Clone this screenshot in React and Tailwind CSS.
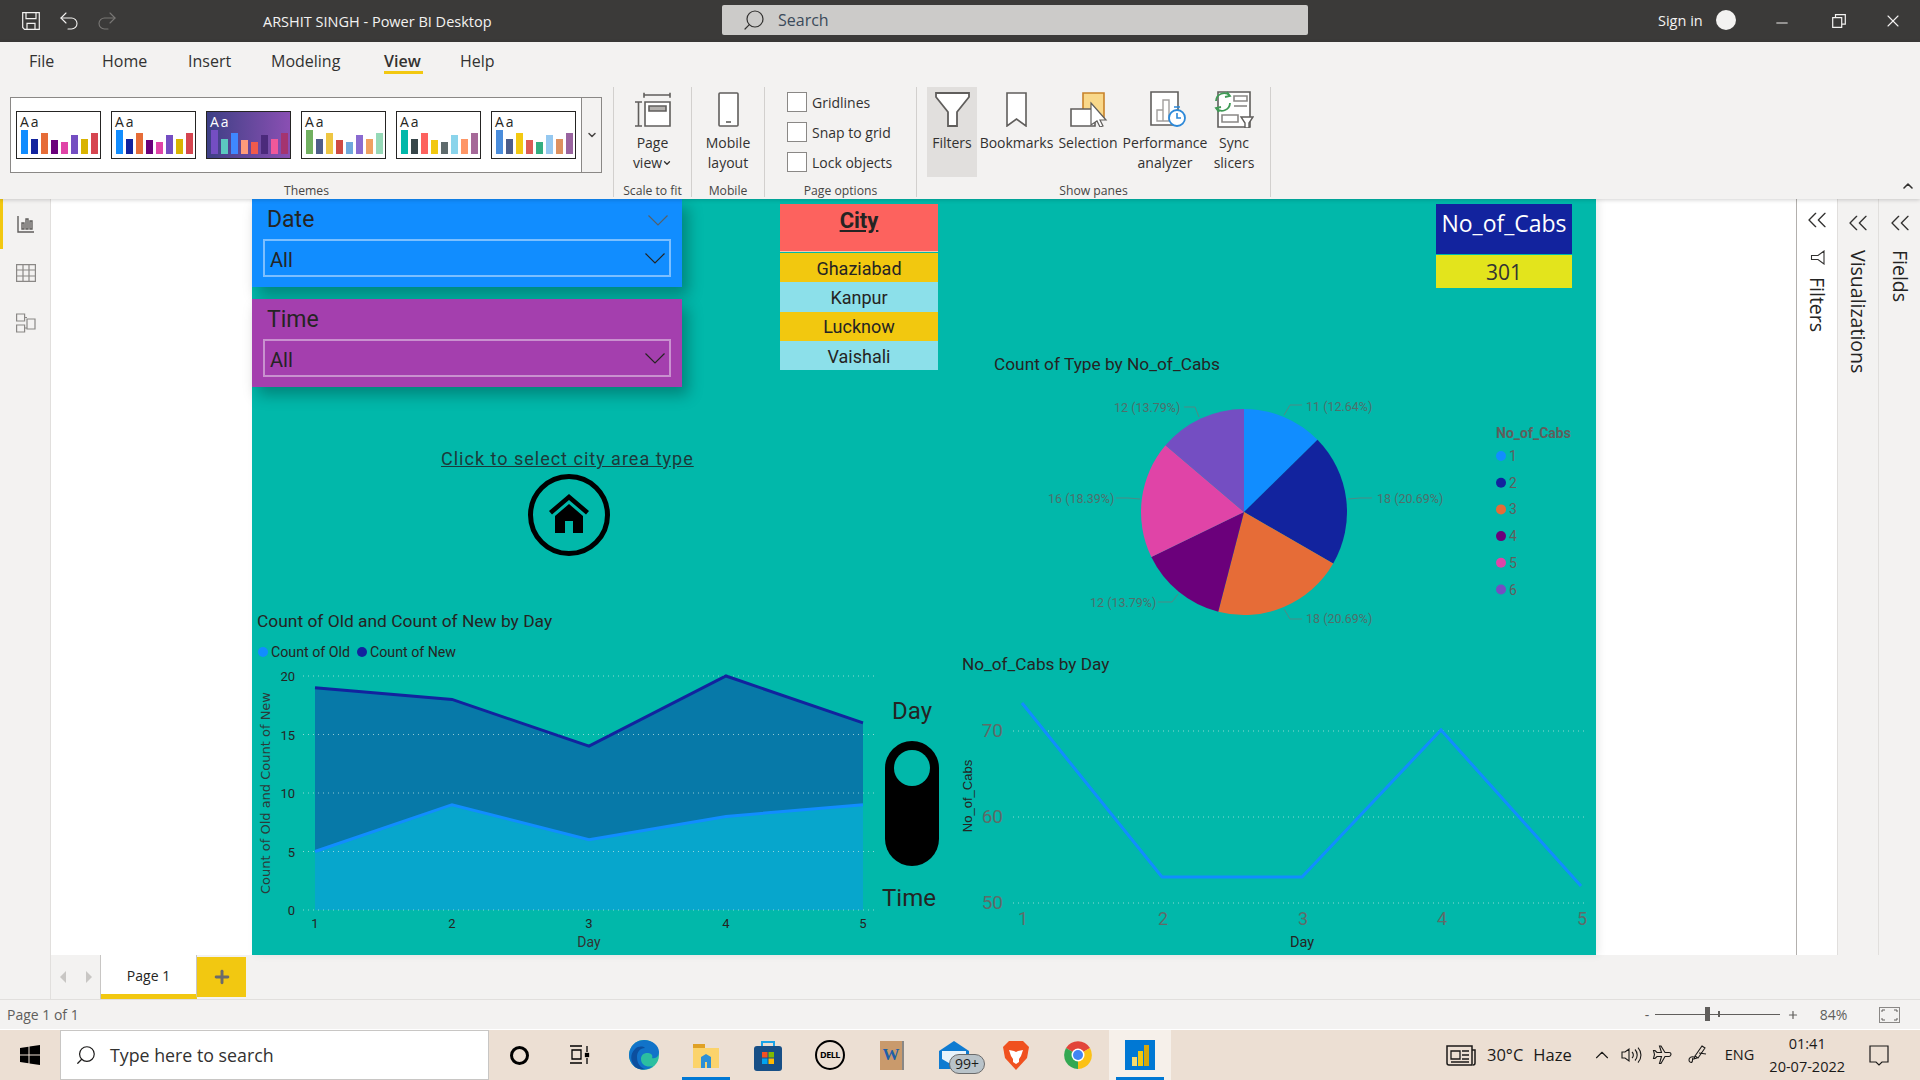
import React from 'react';
import { ChevronDown, ChevronUp, ChevronsLeft, Minus, Plus, Redo2, Search, Undo2, X } from 'lucide-react';

const din = "[font-family:Roboto,sans-serif]";

const themes = [
  { bg: 'bg-white', text: 'text-[#252423]', bars: ['#118dff', '#12239e', '#e66c37', '#6b007b', '#e044a7', '#744ec2', '#d9b300', '#d64550'] },
  { bg: 'bg-white', text: 'text-[#252423]', bars: ['#118dff', '#12239e', '#e66c37', '#6b007b', '#e044a7', '#744ec2', '#d9b300', '#d64550'] },
  { bg: 'bg-gradient-to-r from-[#3d3f85] to-[#8a4fb3]', text: 'text-white', bars: ['#744ec2', '#5bc8c0', '#3f88ff', '#ff9b7a', '#f05a4c', '#4b2a7b', '#f0589a', '#a43470'] },
  { bg: 'bg-white', text: 'text-[#252423]', bars: ['#71b060', '#4e5d8a', '#eec643', '#cf4b43', '#6fa8dc', '#8a6bd0', '#f0a060', '#96d9b7'] },
  { bg: 'bg-white', text: 'text-[#252423]', bars: ['#01b8aa', '#374649', '#fd625e', '#f2c80f', '#5f6b6d', '#8ad4eb', '#fe9666', '#a66999'] },
  { bg: 'bg-white', text: 'text-[#252423]', bars: ['#4a8ddc', '#4c5d8a', '#f3c911', '#dc5b57', '#33ae81', '#95c8f0', '#dd915f', '#9a64a0'] },
];
const barHeights = [24, 15, 21, 14, 12, 19, 15, 21];

const ThemeThumb = ({ theme }) => (
  <div className={`w-[85px] h-[48px] border border-[#252423] px-[3px] relative ${theme.bg}`}>
    <div className={`absolute left-[3px] top-[2px] text-[14px] leading-[16px] tracking-[2px] ${theme.text}`}>Aa</div>
    <div className="absolute left-[4px] bottom-[4px] flex items-end gap-[3px]">
      {theme.bars.map((c, i) => (
        <div key={i} className="w-[7px]" style={{ height: barHeights[i], background: c }} />
      ))}
    </div>
  </div>
);

const Group = ({ width, label, children, labelClass = '' }) => (
  <div className={`${width} h-[110px] shrink-0 flex flex-col border-r border-[#d2d0ce]`}>
    <div className="h-[94px] flex">{children}</div>
    <div className={`h-[16px] leading-[20px] text-[12.2px] text-center text-[#484644] whitespace-nowrap ${labelClass}`}>{label}</div>
  </div>
);

const RibbonButton = ({ icon, lines, width, active, iconClass = '' }) => (
  <div className={`${width} h-[90px] shrink-0 flex flex-col items-center pt-[5px] ${active ? 'bg-[#e1dfdd]' : ''}`}>
    <div className={`h-[35px] flex items-center justify-center ${iconClass}`}>{icon}</div>
    <div className="mt-[6px] text-[14px] leading-[20px] text-center text-[#323130] whitespace-nowrap">
      {lines.map((l, i) => <div key={i} className="flex items-center justify-center">{l}</div>)}
    </div>
  </div>
);

const CheckRow = ({ label }) => (
  <div className="flex items-center gap-[5px] h-[20px]">
    <div className="w-[20px] h-[20px] bg-white border border-[#8a8886]" />
    <span className="text-[14px] text-[#323130] whitespace-nowrap">{label}</span>
  </div>
);

const TitleBar = () => (
  <div className="h-[42px] shrink-0 bg-[#3b3a39] flex items-center text-white">
    <svg className="ml-[22px]" width="18" height="18" viewBox="0 0 18 18" fill="none" stroke="#f3f2f1" strokeWidth="1.2">
      <path d="M.7.7h16.6v16.6H2.5L.7 15.5z" />
      <path d="M4 .7v6h10v-6M5 17.3v-6h8v6" />
    </svg>
    <Undo2 className="ml-[17px]" size={24} strokeWidth={1.1} color="#f3f2f1" />
    <Redo2 className="ml-[14px]" size={24} strokeWidth={1.1} color="#797775" />
    <div className="ml-[144px] w-[228px] text-[14.5px] whitespace-nowrap text-[#f3f2f1] mt-[2px]">ARSHIT SINGH - Power BI Desktop</div>
    <div className="ml-[231px] w-[586px] h-[30px] mb-[2px] rounded-[2px] bg-[#cccbc9] flex items-center pl-[20px] text-[#3b4a5a]">
      <Search size={24} strokeWidth={1.2} color="#323130" className="-scale-x-100" />
      <span className="ml-[12px] text-[16px]">Search</span>
    </div>
    <div className="ml-[350px] text-[14.5px] text-[#f3f2f1] mb-[1px]">Sign in</div>
    <div className="ml-[13px] w-[20px] h-[20px] rounded-full bg-[#f3f2f1] mb-[3px]" />
    <Minus className="ml-[37px] mt-[3px]" size={18} strokeWidth={1.3} color="#f3f2f1" />
    <svg className="ml-[41px]" width="14" height="14" viewBox="0 0 14 14" fill="none" stroke="#f3f2f1" strokeWidth="1.2">
      <path d="M.7 3.7h9v9.6h-9zM3.5 3.5V.7h9.8v9.5h-3.5" />
    </svg>
    <X className="ml-[37px]" size={20} strokeWidth={1.3} color="#f3f2f1" />
  </div>
);

const Ribbon = () => (
  <div className="h-[157px] shrink-0 bg-[#f3f2f1] relative z-10 shadow-[0_1px_4px_rgba(0,0,0,0.18)]">
    <div className="h-[36px] pt-[2px] flex items-center text-[16px] text-[#323130] relative">
      <span className="ml-[29px] w-[73px]">File</span>
      <span className="w-[86px]">Home</span>
      <span className="w-[83px]">Insert</span>
      <span className="w-[113px]">Modeling</span>
      <span className="w-[76px] font-semibold relative">
        View
        <span className="absolute left-0 top-[22px] w-[39px] h-[3px] bg-[#f2c811]" />
      </span>
      <span>Help</span>
    </div>
    <div className="pt-[9px] pl-[10px] flex">
      <Group width="w-[604px]" label="Themes" labelClass="pr-[10px]">
        <div className="mt-[10px] w-[592px] h-[76px] bg-white border border-[#8a8886] flex">
          <div className="w-[570px] flex items-center gap-[10px] pl-[5px]">
            {themes.map((t, i) => <ThemeThumb key={i} theme={t} />)}
          </div>
          <div className="flex-1 bg-[#f3f2f1] border-l border-[#8a8886] flex items-center justify-center">
            <ChevronDown size={12} strokeWidth={3} color="#484644" />
          </div>
        </div>
      </Group>
      <Group width="w-[78px]" label="Scale to fit">
        <RibbonButton width="w-full" lines={['Page', <>view<ChevronDown size={10} strokeWidth={3} color="#323130" /></>]} icon={
          <svg width="36" height="35" viewBox="0 0 36 35" fill="none" stroke="#605e5c" strokeWidth="1.6">
            <path d="M9 .8v5M9 3h26M35 .8v5M0 10h7M3.5 10v24M0 34h7" />
            <path d="M10 10h25v24H10z" fill="#fff" />
            <path d="M14 14h17v5H14z" fill="#b3b0ad" />
          </svg>
        } />
      </Group>
      <Group width="w-[73px]" label="Mobile">
        <RibbonButton width="w-full" lines={['Mobile', 'layout']} icon={
          <svg width="21" height="35" viewBox="0 0 21 35" fill="#fff" stroke="#605e5c" strokeWidth="1.6">
            <rect x="1" y="1" width="19" height="33" rx="1" />
            <path d="M8 30h5" />
          </svg>
        } />
      </Group>
      <Group width="w-[152px]" label="Page options">
        <div className="pl-[22px] pt-[5px] flex flex-col gap-[10px]">
          <CheckRow label="Gridlines" />
          <CheckRow label="Snap to grid" />
          <CheckRow label="Lock objects" />
        </div>
      </Group>
      <Group width="w-[354px]" label="Show panes">
        <div className="pl-[10px] flex">
          <RibbonButton active width="w-[50px]" lines={['Filters']} icon={
            <svg width="35" height="35" viewBox="0 0 35 35" fill="#fff" stroke="#605e5c" strokeWidth="1.8">
              <path d="M1 1h33v4L22 20v14h-9V20L1 5z" />
            </svg>
          } />
          <RibbonButton width="w-[79px]" lines={['Bookmarks']} icon={
            <svg width="21" height="35" viewBox="0 0 21 35" fill="#fff" stroke="#605e5c" strokeWidth="1.6">
              <path d="M1 1h19v33l-9.500-7L1 34z" />
            </svg>
          } />
          <RibbonButton width="w-[64px]" iconClass="translate-x-[1px]" lines={['Selection']} icon={
            <svg width="38" height="35" viewBox="0 0 38 35">
              <path d="M13 1h21v26H13z" fill="#f9d88a" stroke="#c8822a" strokeWidth="1.6" />
              <path d="M1 17h24v17H1z" fill="#fff" stroke="#605e5c" strokeWidth="1.6" />
              <path d="M21 11l15 17-6 0 3 6-3 1-3-6-6 4z" fill="#fff" stroke="#605e5c" strokeWidth="1.2" />
            </svg>
          } />
          <RibbonButton width="w-[90px]" iconClass="translate-x-[3px]" lines={['Performance', 'analyzer']} icon={
            <svg width="36" height="37" viewBox="0 0 36 37" fill="none">
              <path d="M1 1h27v33H1z" fill="#fff" stroke="#605e5c" strokeWidth="1.6" />
              <path d="M7 19h6v11H7zM13 9h6v21h-6z" stroke="#a19f9d" strokeWidth="1.4" />
              <circle cx="27" cy="27" r="8" fill="#fff" stroke="#2b88d8" strokeWidth="1.8" />
              <path d="M27 22v5h4M24 16h6" stroke="#2b88d8" strokeWidth="1.6" />
            </svg>
          } />
          <RibbonButton width="w-[48px]" lines={['Sync', 'slicers']} icon={
            <svg width="40" height="37" viewBox="0 0 40 37" fill="none">
              <path d="M4 1h32v35H4z" fill="#fff" stroke="#605e5c" strokeWidth="1.6" />
              <path d="M20 5h13v5H20zM8 24h16v7H8z" stroke="#8a8886" strokeWidth="1.6" />
              <path d="M20 15h13" stroke="#8a8886" strokeWidth="1.6" />
              <path d="M27 26h12l-4 6v5h-4v-5z" fill="#fff" stroke="#605e5c" strokeWidth="1.4" />
              <path d="M2 10a8 8 0 0 1 14-5M16 12a8 8 0 0 1-14 5M13 1l3 4-5 1M5 21l-3-4 5-1" stroke="#3f9a55" strokeWidth="1.8" fill="none" />
            </svg>
          } />
        </div>
      </Group>
      <div className="flex-1 flex justify-end items-end pr-[4px] pb-[3px]">
        <ChevronUp size={16} strokeWidth={2.4} color="#323130" />
      </div>
    </div>
  </div>
);

const Rail = () => (
  <div className="w-[51px] shrink-0 bg-[#f3f2f1] border-r border-[#e1dfdd] pl-[2px] flex flex-col items-center relative">
    <div className="absolute left-0 top-0 w-[3px] h-[50px] bg-[#f2c811]" />
    <svg className="mt-[16px]" width="18" height="18" viewBox="0 0 18 18" fill="none" stroke="#605e5c" strokeWidth="1.4">
      <path d="M1 1v16h16M5 14V8h2v6zM9 14V4h2v10zM13 14V6h2v8z" />
    </svg>
    <svg className="mt-[31px]" width="20" height="18" viewBox="0 0 20 18" fill="none" stroke="#8a8886" strokeWidth="1.2">
      <path d="M.6.6h18.800v16.800H.6zM.6 6h18.800M.6 12h18.800M7 .6v16.800M13 .6v16.800" />
    </svg>
    <svg className="mt-[31px]" width="20" height="20" viewBox="0 0 20 20" fill="none" stroke="#8a8886" strokeWidth="1.2">
      <path d="M.6 1h8v7h-8zM.6 12h8v7h-8zM11 6h8v10h-8zM8.600 4.500H11M8.600 15H11" />
    </svg>
  </div>
);

const Vee = ({ color }) => (
  <svg width="20" height="11" viewBox="0 0 20 11" fill="none" stroke={color} strokeWidth="1.2">
    <path d="M.5.5L10 10 19.500.5" />
  </svg>
);

const Slicer = ({ bg, border, label, top, chevron }) => (
  <div className={`absolute left-0 ${top} w-[430px] h-[88px] ${bg} shadow-[6px_8px_14px_rgba(0,0,0,0.28)] ${din} flex flex-col`}>
    <div className="h-[40px] pt-[2px] flex items-center justify-between pl-[15px] pr-[14px] text-[23px] text-[#252423]">
      <span>{label}</span>
      {chevron && <Vee color="#55606a" />}
    </div>
    <div className={`mx-[11px] h-[38px] border-2 ${border} flex items-center justify-between pl-[5px] pr-[4px] text-[#252423] text-[20px]`}>
      <span className="mt-[4px]">All</span>
      <Vee color="#252423" />
    </div>
  </div>
);

const CityList = () => (
  <div className={`absolute left-[528px] top-[5px] w-[158px] ${din} text-[18px] text-[#252423] text-center`}>
    <div className="h-[48px] bg-[#fd625e] border-b border-[#f6c9b0] pt-[2px] text-[22px] font-bold underline leading-[30px]">City</div>
    <div className="h-[29px] mt-[1px] bg-[#f2c80f] leading-[31px]">Ghaziabad</div>
    <div className="h-[30px] bg-[#8ce0ea] leading-[31px]">Kanpur</div>
    <div className="h-[29px] bg-[#f2c80f] leading-[29px]">Lucknow</div>
    <div className="h-[29px] bg-[#8ce0ea] leading-[31px]">Vaishali</div>
  </div>
);

const CabsCard = () => (
  <div className="absolute left-[1184px] top-[5px] w-[136px] text-center">
    <div className="h-[50px] bg-[#12239e] text-white text-[23px] leading-[38px]">No_of_Cabs</div>
    <div className="h-[33px] mt-[1px] bg-[#e3e41c] text-[#333] text-[21px] leading-[34px]">301</div>
  </div>
);

const polar = (cx, cy, r, a) => [cx + r * Math.sin(a), cy - r * Math.cos(a)];

const pieData = [
  { v: 11, c: '#118dff' },
  { v: 18, c: '#12239e' },
  { v: 18, c: '#e66c37' },
  { v: 12, c: '#6b007b' },
  { v: 16, c: '#e044a7' },
  { v: 12, c: '#744ec2' },
];

const pieLabels = [
  { t: '11 (12.64%)', x: 1306, y: 407, line: '1284,415 1290,405 1302,405' },
  { t: '18 (20.69%)', x: 1377, y: 499, line: '1348,499 1360,498 1372,498' },
  { t: '18 (20.69%)', x: 1306, y: 619, line: '1284,609 1290,619 1302,619' },
  { t: '12 (13.79%)', x: 1090, y: 603, line: '1178,594 1172,602 1158,602' },
  { t: '16 (18.39%)', x: 1048, y: 499, line: '1140,499 1128,498 1116,498' },
  { t: '12 (13.79%)', x: 1114, y: 408, line: '1199,417 1195,407 1184,407' },
];

const PieChart = () => {
  let angle = 0;
  const slices = pieData.map((d) => {
    const start = angle;
    angle += (d.v / 87) * Math.PI * 2;
    const [x1, y1] = polar(1244, 512, 103, start);
    const [x2, y2] = polar(1244, 512, 103, angle);
    return <path key={d.c} d={`M1244 512L${x1} ${y1}A103 103 0 0 1 ${x2} ${y2}Z`} fill={d.c} />;
  });
  return (
    <svg className="absolute left-[730px] top-[150px]" width="600" height="290" viewBox="982 349 600 290" fontFamily="Roboto, sans-serif">
      <text x="994" y="370" fontSize="17.300" fill="#252423">Count of Type by No_of_Cabs</text>
      {slices}
      {pieLabels.map((l, i) => (
        <g key={i}>
          <polyline points={l.line} fill="none" stroke="#4f8a85" strokeWidth="1" />
          <text x={l.x} y={l.y + 4} fontSize="12.500" fill="#4f6f6b">{l.t}</text>
        </g>
      ))}
      <text x="1496" y="438" fontSize="14" fontWeight="700" fill="#605e5c">No_of_Cabs</text>
      {pieData.map((d, i) => (
        <g key={d.c}>
          <circle cx="1501" cy={456 + i * 26.7} r="5" fill={d.c} />
          <text x="1509" y={461 + i * 26.7} fontSize="14" fill="#605e5c">{i + 1}</text>
        </g>
      ))}
    </svg>
  );
};

const areaX = [315, 452, 589, 726, 863];
const areaY = (v) => 910 - v * 11.7;
const toPoints = (vals) => vals.map((v, i) => `${areaX[i]},${areaY(v)}`).join(' ');
const newVals = [19, 18, 14, 20, 16];
const oldVals = [5, 9, 6, 8, 9];

const AreaChart = () => (
  <svg className="absolute left-0 top-[406px]" width="628" height="350" viewBox="252 605 628 350" fontFamily="Roboto, sans-serif">
    <text x="257" y="627" fontSize="17.400" fill="#252423">Count of Old and Count of New by Day</text>
    <circle cx="263" cy="652" r="5" fill="#118dff" />
    <text x="271" y="657" fontSize="14.200" fill="#252423">Count of Old</text>
    <circle cx="362" cy="652" r="5" fill="#12239e" />
    <text x="370" y="657" fontSize="14.200" fill="#252423">Count of New</text>
    <polygon points={`${toPoints(newVals)} 863,910 315,910`} fill="#0779a8" />
    <polygon points={`${toPoints(oldVals)} 863,910 315,910`} fill="#07a6cc" />
    {[0, 5, 10, 15, 20].map((v) => (
      <g key={v}>
        <line x1="303" x2="874" y1={areaY(v)} y2={areaY(v)} stroke="#c8e8e4" strokeOpacity="0.7" strokeDasharray="1 4" />
        <text x="295" y={areaY(v) + 5} fontSize="13" textAnchor="end" fill="#252423">{v}</text>
      </g>
    ))}
    <polyline points={toPoints(newVals)} fill="none" stroke="#12239e" strokeWidth="3" />
    <polyline points={toPoints(oldVals)} fill="none" stroke="#118dff" strokeWidth="3" />
    {areaX.map((x, i) => (
      <text key={x} x={x} y="928" fontSize="13" textAnchor="middle" fill="#252423">{i + 1}</text>
    ))}
    <text x="589" y="947" fontSize="14" textAnchor="middle" fill="#333">Day</text>
    <text transform="translate(270 793) rotate(-90)" fontSize="13" textAnchor="middle" fill="#2b3b3a" fontFamily="DejaVu Sans, sans-serif">Count of Old and Count of New</text>
  </svg>
);

const lineX = [1022, 1162, 1302, 1441, 1581];
const lineY = [703, 877, 877, 730, 886];

const LineChart = () => (
  <svg className="absolute left-[698px] top-[441px]" width="646" height="315" viewBox="950 640 646 315" fontFamily="Roboto, sans-serif">
    <text x="962" y="670" fontSize="17.200" fill="#252423">No_of_Cabs by Day</text>
    {[[70, 731], [60, 817], [50, 903]].map(([v, y]) => (
      <g key={v}>
        <line x1="1013" x2="1588" y1={y} y2={y} stroke="#c8e8e4" strokeOpacity="0.7" strokeDasharray="1 4" />
        <text x="1003" y={y + 6} fontSize="19" textAnchor="end" fill="#5f6b68">{v}</text>
      </g>
    ))}
    <polyline points={lineX.map((x, i) => `${x},${lineY[i]}`).join(' ')} fill="none" stroke="#118dff" strokeWidth="3" />
    {lineX.map((x, i) => (
      <text key={x} x={x + 1} y="925" fontSize="18" textAnchor="middle" fill="#5f6b68">{i + 1}</text>
    ))}
    <text x="1302" y="947" fontSize="14.500" textAnchor="middle" fill="#252423">Day</text>
    <text transform="translate(972 796) rotate(-90)" fontSize="13" textAnchor="middle" fill="#252423" fontFamily="Liberation Sans, sans-serif">No_of_Cabs</text>
  </svg>
);

const Toggle = () => (
  <div className={`absolute left-[628px] top-[495px] w-[64px] flex flex-col items-center text-[24px] text-[#252423] ${din}`}>
    <div className="h-[34px] leading-[34px]">Day</div>
    <div className="mt-[13px] w-[54px] h-[125px] rounded-[27px] bg-black pt-[9px] flex justify-center">
      <div className="w-[36px] h-[36px] rounded-full bg-[#01b8aa]" />
    </div>
    <div className="mt-[15px] h-[34px] leading-[34px] -ml-[6px]">Time</div>
  </div>
);

const Canvas = () => (
  <div className="w-[1344px] h-[756px] shrink-0 bg-[#01b8aa] relative shadow-[3px_0_8px_rgba(0,0,0,0.08)]">
    <Slicer top="top-0" bg="bg-[#118dff]" border="border-[#7cbfff]" label="Date" chevron />
    <Slicer top="top-[100px]" bg="bg-[#a43fae]" border="border-[#c991cf]" label="Time" />
    <CityList />
    <CabsCard />
    <div className={`absolute left-[189px] top-[247px] h-[26px] leading-[26px] text-[18px] tracking-[1px] underline text-[#1c3a3a] whitespace-nowrap ${din}`}>
      Click to select city area type
    </div>
    <svg className="absolute left-[276px] top-[275px]" width="82" height="82" viewBox="0 0 82 82">
      <circle cx="41" cy="41" r="38.500" fill="none" stroke="#000" strokeWidth="5" />
      <path d="M21 37L41 20l20 17-3 3.500L41 26 24 40.500z" fill="#000" />
      <path d="M27 42l14-12 14 12v17H45V47h-8v12H27z" fill="#000" />
    </svg>
    <PieChart />
    <AreaChart />
    <Toggle />
    <LineChart />
  </div>
);

const SidePane = ({ bg, icon, label, border, top, textTop }) => (
  <div className={`w-[41px] shrink-0 ${bg} ${border} ${top} flex flex-col items-center`}>
    <ChevronsLeft size={32} strokeWidth={1} color="#323130" />
    {icon}
    <div className={`${textTop} [writing-mode:vertical-rl] text-[19.500px] leading-[24px] text-[#252423] whitespace-nowrap`}>{label}</div>
  </div>
);

const TabBar = () => (
  <div className="h-[44px] shrink-0 bg-[#f3f2f1] flex">
    <div className="w-[51px] border-r border-[#e1dfdd]" />
    <div className="w-[50px] flex items-center justify-center gap-[20px] border-r border-[#c8c6c4]">
      <svg width="6" height="12" viewBox="0 0 6 12" fill="#c8c6c4"><path d="M6 0v12L0 6z" /></svg>
      <svg width="6" height="12" viewBox="0 0 6 12" fill="#c8c6c4"><path d="M0 0v12l6-6z" /></svg>
    </div>
    <div className="w-[96px] bg-white border-b-[5px] border-[#f2c811] border-r border-r-[#c8c6c4] text-center text-[14px] leading-[42px] text-[#252423] font-medium">Page 1</div>
    <div className="mt-[2px] w-[49px] h-[40px] bg-[#f2c811] flex items-center justify-center">
      <Plus size={20} strokeWidth={3.500} color="#6b6b6b" />
    </div>
  </div>
);

const StatusBar = () => (
  <div className="h-[30px] shrink-0 bg-[#f3f2f1] border-t border-[#e1dfdd] flex items-center text-[#605e5c] text-[14px]">
    <span className="ml-[7px]">Page 1 of 1</span>
    <span className="ml-[1566px] w-[10px]">-</span>
    <div className="relative w-[125px] h-[1px] bg-[#605e5c]">
      <div className="absolute left-[50px] -top-[7px] w-[5px] h-[14px] bg-[#605e5c]" />
      <div className="absolute left-[63px] -top-[3px] w-[2px] h-[6px] bg-[#605e5c]" />
    </div>
    <Plus className="ml-[7px]" size={12} strokeWidth={2.4} color="#605e5c" />
    <span className="ml-[21px] text-[14px]">84%</span>
    <svg className="ml-[32px]" width="21" height="16" viewBox="0 0 21 16" fill="none">
      <rect x="0.500" y="0.500" width="20" height="15" stroke="#8a8886" />
      <path d="M3 5V3h3M15 3h3v2M3 11v2h3M18 11v2h-3" stroke="#605e5c" />
    </svg>
  </div>
);

const Slot = ({ children, active, underline }) => (
  <div className={`w-[62px] h-full shrink-0 flex items-center justify-center relative ${active ? 'bg-[#f6f0ea]' : ''}`}>
    {children}
    {underline && <div className="absolute bottom-0 left-[7px] right-[7px] h-[3px] bg-[#0078d4]" />}
  </div>
);

const Taskbar = () => (
  <div className="h-[51px] shrink-0 bg-[#ecdfd3] border-t border-white flex items-center text-[#1b1a19]">
    <div className="w-[60px] h-full flex items-center justify-center">
      <svg width="20" height="20" viewBox="0 0 20 20" fill="#000">
        <path d="M0 3l8.500-1.200v7.700H0zM9.500 1.600L20 0v9.500H9.500zM0 10.500h8.500v7.700L0 17zM9.500 10.500H20V20L9.500 18.400z" />
      </svg>
    </div>
    <div className="w-[429px] h-full bg-white border border-[#c8c6c4] flex items-center pl-[14px]">
      <Search size={22} strokeWidth={1.3} color="#1b1a19" className="-scale-x-100" />
      <span className="ml-[13px] text-[17.800px] text-[#323130]">Type here to search</span>
    </div>
    <div className="w-[61px] h-full flex items-center justify-center">
      <div className="w-[19px] h-[19px] rounded-full border-[3px] border-black" />
    </div>
    <div className="w-[61px] pr-[2px] h-full flex items-center justify-center">
      <svg width="21" height="20" viewBox="0 0 21 20" fill="none" stroke="#000" strokeWidth="1.300">
        <path d="M1 1h12M3 5h9v9H3zM1 18h12M18 1v6M18 13v6" />
        <rect x="16.500" y="8.500" width="3" height="3" fill="#000" />
      </svg>
    </div>
    <div className="w-[2px]" />
    <Slot>
      <svg width="30" height="30" viewBox="0 0 30 30">
        <circle cx="15" cy="15" r="15" fill="#2bbfa0" />
        <path d="M15 0a15 15 0 0 0-9 27c5 3 13 4 18-1-6 2-12-1-12-7 0-4 3-6 6-6 5 0 6 3 5 5 4 1 7-2 7-6C30 5 23 0 15 0z" fill="#1173c9" />
        <path d="M6 27c-5-6-5-13 0-18 3-3 8-3 10-1-5 0-8 4-8 9 0 4 1 7 4 10 2 1 3 2 4 2-4 1-7 0-10-2z" fill="#0c4f9e" />
      </svg>
    </Slot>
    <Slot underline>
      <svg width="28" height="28" viewBox="0 0 28 28">
        <path d="M1 3h12v5H1z" fill="#e0a125" />
        <path d="M1 7h26v20H1z" fill="#fbd36b" />
        <path d="M9 27V16l5-3 5 3v11h-4v-6h-2v6z" fill="#2c8fd6" />
      </svg>
    </Slot>
    <Slot>
      <svg width="28" height="31" viewBox="0 0 28 31">
        <path d="M8 7V2h12v5" fill="none" stroke="#1aa3e8" strokeWidth="2" />
        <rect y="6" width="28" height="25" rx="3" fill="#174f86" />
        <rect x="8" y="12" width="5.500" height="5.500" fill="#f25022" />
        <rect x="14.500" y="12" width="5.500" height="5.500" fill="#7fba00" />
        <rect x="8" y="18.500" width="5.500" height="5.500" fill="#00a4ef" />
        <rect x="14.500" y="18.500" width="5.500" height="5.500" fill="#ffb900" />
      </svg>
    </Slot>
    <Slot>
      <div className="w-[30px] h-[30px] rounded-full border-2 border-black flex items-center justify-center text-[9px] font-bold tracking-[-0.5px] text-black">DELL</div>
    </Slot>
    <Slot>
      <div className="w-[24px] h-[29px] bg-[#c99a6c] border-r-2 border-[#8a8886] flex items-center justify-center text-[#1f5fa8] font-bold text-[17px] [font-family:'Liberation_Serif',serif]">W</div>
    </Slot>
    <Slot>
      <div className="relative w-[30px] h-[28px]">
        <svg className="absolute left-0 top-0" width="30" height="28" viewBox="0 0 30 28">
          <path d="M0 10L15 0l15 10v18H0z" fill="#0f7bd1" />
          <path d="M3 10h24v8l-12 7-12-7z" fill="#e8f3fb" />
        </svg>
        <div className="absolute left-[10px] top-[13px] w-[36px] h-[20px] rounded-full bg-[#b9c3c9] border border-[#6b6b6b] text-[14px] leading-[18px] text-center">99+</div>
      </div>
    </Slot>
    <Slot>
      <svg width="26" height="30" viewBox="0 0 26 30">
        <path d="M6 1h14l3 3 3 3-2 11-11 12L2 18 0 7l3-3z" fill="#f0511f" />
        <path d="M6 10l5 1 2 1 2-1 5-1-2 6-2 3v3l-3 2-3-2v-3l-2-3z" fill="#fff" />
      </svg>
    </Slot>
    <Slot>
      <svg width="28" height="28" viewBox="0 0 28 28">
        <path d="M14 14L2 7a14 14 0 0 1 24 0z" fill="#e2453a" />
        <path d="M14 14L26 7a14 14 0 0 1-12 21z" fill="#fbc116" />
        <path d="M14 14v14A14 14 0 0 1 2 7z" fill="#33a852" />
        <circle cx="14" cy="14" r="6.500" fill="#fff" />
        <circle cx="14" cy="14" r="5" fill="#4285f4" />
      </svg>
    </Slot>
    <Slot active underline>
      <div className="w-[30px] h-[30px] bg-[#0078d4] flex items-end justify-center gap-[1px] pb-[4px]">
        <div className="w-[5px] h-[9px] bg-[#f7dc6f]" />
        <div className="w-[5px] h-[15px] bg-[#f2c811]" />
        <div className="w-[5px] h-[21px] bg-[#d6a80c]" />
      </div>
    </Slot>
    <div className="ml-[275px] flex items-center">
      <svg width="30" height="21" viewBox="0 0 30 21" fill="none" stroke="#1b1a19" strokeWidth="1.500">
        <path d="M1 1h25v19H3a2 2 0 0 1-2-2zM26 5h3v13a2 2 0 0 1-2 2" />
        <path d="M5 6h9v8H5zM16 6h7M16 10h7M16 14h7M5 17h18" strokeWidth="1.300" />
      </svg>
      <span className="ml-[11px] text-[16.500px]">30°C</span>
      <span className="ml-[10px] text-[16.500px]">Haze</span>
      <ChevronUp className="ml-[19px]" size={22} strokeWidth={1.2} color="#1b1a19" />
      <svg className="ml-[8px]" width="21" height="18" viewBox="0 0 21 18" fill="none" stroke="#1b1a19" strokeWidth="1.100">
        <path d="M1 6h3l4-3v12l-4-3H1zM11 6a4 4 0 0 1 0 6M14 3.500a8 8 0 0 1 0 11M17 1.500a11 11 0 0 1 0 15" />
      </svg>
      <svg className="ml-[10px]" width="20" height="20" viewBox="0 0 20 20" fill="none" stroke="#1b1a19" strokeWidth="1.100">
        <path d="M19 9c0-1-1-1.500-2-1.500h-4L9 1H7.500l2 6.500H5L3 5.500H1.500l1 4-1 4H3L5 11.500h4.500l-2 7H9l4-7h4c1 0 2-1.500 2-2.500z" />
      </svg>
      <svg className="ml-[15px]" width="20" height="20" viewBox="0 0 20 20" fill="none" stroke="#1b1a19" strokeWidth="1.100">
        <path d="M15 1l3 2-7 10-3-2zM8 11l-1 3 3-1M12 8l7 1M7 12c-3-1-5 1-5 3s2 3 3 2 0-3 1-4" />
      </svg>
      <span className="ml-[18px] text-[14.500px]">ENG</span>
      <div className="ml-[15px] w-[76px] text-center text-[14.500px] leading-[23px]">
        <div>01:41</div>
        <div>20-07-2022</div>
      </div>
      <svg className="ml-[24px]" width="20" height="21" viewBox="0 0 20 21" fill="none" stroke="#1b1a19" strokeWidth="1.200">
        <path d="M1 1h18v16h-6l-3 3-3-3H1z" />
      </svg>
    </div>
  </div>
);

const App = () => (
  <div className="w-[1920px] h-[1080px] overflow-hidden flex flex-col bg-[#f3f2f1] [font-family:'Open_Sans',sans-serif]">
    <TitleBar />
    <Ribbon />
    <div className="h-[756px] shrink-0 flex">
      <Rail />
      <div className="w-[1746px] shrink-0 bg-white flex pl-[201px] border-r border-[#b3b0ad]">
        <Canvas />
      </div>
      <SidePane bg="bg-white" border="border-r border-[#e1dfdd]" top="pt-[5px]" textTop="mt-[12px]" label="Filters" icon={
        <svg className="mt-[14px]" width="15" height="15" viewBox="0 0 15 15" fill="none" stroke="#323130" strokeWidth="1.100">
          <path d="M1 1h13L9.500 7v6.500h-4V7z" transform="rotate(90 7.500 7.500)" />
        </svg>
      } />
      <SidePane bg="bg-[#f3f2f1]" border="border-r border-[#e1dfdd]" top="pt-[8px]" textTop="mt-[11px]" label="Visualizations" />
      <SidePane bg="bg-[#f3f2f1]" top="pt-[8px]" textTop="mt-[11px]" label="Fields" />
    </div>
    <TabBar />
    <StatusBar />
    <Taskbar />
  </div>
);

export default App;
